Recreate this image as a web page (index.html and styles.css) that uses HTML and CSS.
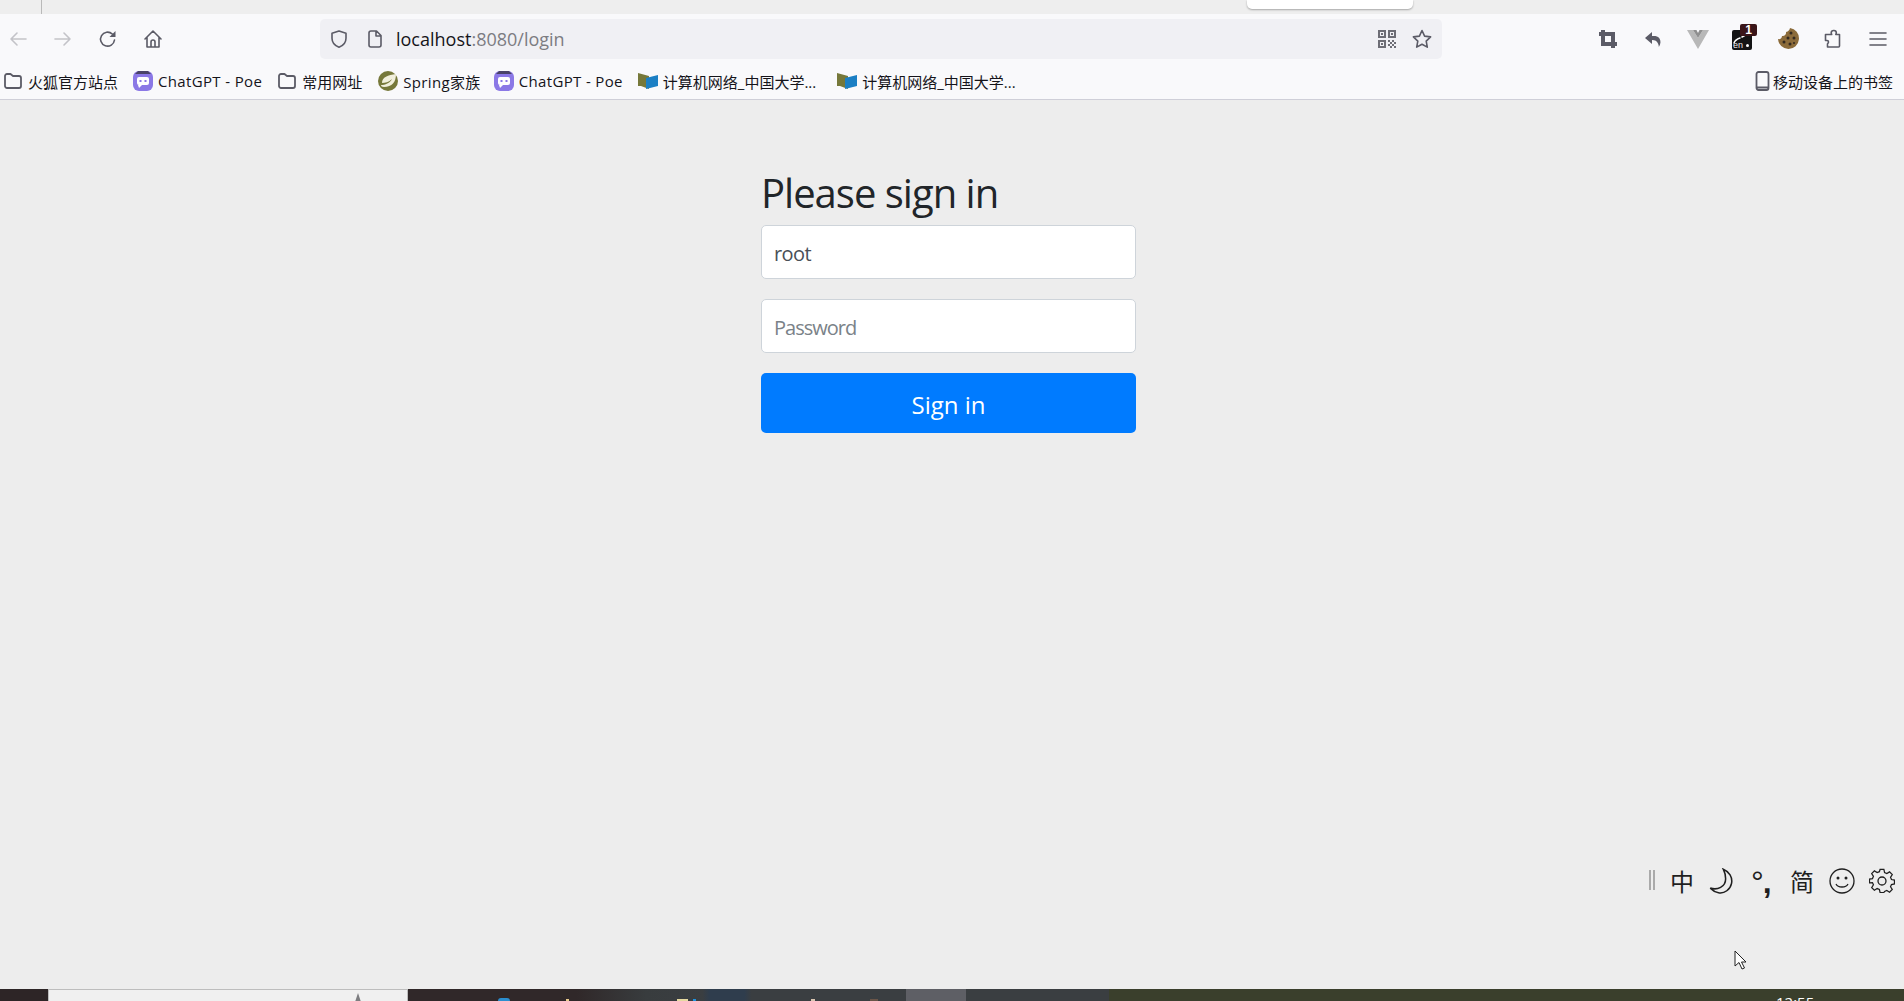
FILE: index.html
```html
<!DOCTYPE html>
<html lang="en">
<head>
<meta charset="utf-8">
<title>Please sign in</title>
<link rel="stylesheet" href="styles.css">
</head>
<body>
<div class="tabstrip"><span class="tab-sep"></span><span class="popup-edge"></span></div>
<header class="toolbar">
  <nav class="nav-group">
    <button class="tool faded"><svg viewBox="0 0 20 20" width="20" height="20"><path d="M18 10H3M9 4l-6 6 6 6"/></svg></button>
    <button class="tool faded"><svg viewBox="0 0 20 20" width="20" height="20"><path d="M2 10h15M11 4l6 6-6 6"/></svg></button>
    <button class="tool"><svg viewBox="0 0 20 20" width="20" height="20"><path d="M16.5 11a7 7 0 1 1-2.2-6"/><path class="fill" d="M17.5 2v6h-6z"/></svg></button>
    <button class="tool"><svg viewBox="0 0 20 20" width="20" height="20"><path d="M2 10l8-8 8 8M4 8.5V18h12V8.5M8 18v-5a2 2 0 0 1 4 0v5"/></svg></button>
  </nav>
  <div class="urlbar">
    <svg class="url-shield" viewBox="0 0 20 20" width="20" height="20"><path d="M10 2l7 2.2v5c0 4.500-3 7.500-7 9-4-1.500-7-4.500-7-9v-5z"/></svg>
    <svg class="url-file" viewBox="0 0 20 20" width="20" height="20"><path d="M4 4a2 2 0 0 1 2-2h5.500L16 6.500V16a2 2 0 0 1-2 2H6a2 2 0 0 1-2-2zM11 2v5h5"/></svg>
    <span class="url-text">localhost<span class="url-dim">:8080/login</span></span>
    <svg class="url-qr" viewBox="0 0 18 18" width="18" height="18"><path class="qr" d="M0 0h8v8H0zM2 2v4h4V2zM10 0h8v8h-8zM12 2v4h4V2zM0 10h8v8H0zM2 12v4h4v-4zM3 3h2v2H3zM13 3h2v2h-2zM3 13h2v2H3zM10 10h2v2h-2zM14 10h2v2h-2zM12 12h2v2h-2zM16 12h2v2h-2zM10 14h2v2h-2zM14 14h2v2h-2zM12 16h2v2h-2zM16 16h2v2h-2z"/></svg>
    <svg class="url-star" viewBox="0 0 20 20" width="20" height="20"><path d="M10 1.500l2.600 5.600 6 .8-4.400 4.200 1.100 6L10 15.200l-5.300 2.900 1.100-6L1.400 7.900l6-.8z"/></svg>
  </div>
  <div class="ext-group">
    <button class="tool"><svg viewBox="0 0 20 20" width="20" height="20"><path class="thick" d="M5 1v14h14M1 5h14v14"/></svg></button>
    <button class="tool"><svg viewBox="0 0 20 20" width="20" height="20"><path class="fill" d="M9 3L2 9l7 6v-4c3 0 5 1 6 3.500 1 2 .8 3.500.8 3.500 2-3 2.200-6 .7-8.500C15 7 12 6.800 9 7z"/></svg></button>
    <button class="tool"><svg viewBox="0 0 24 24" width="24" height="24"><path class="vue-a" d="M1 3h6l5 8 5-8h6L12 22z"/><path class="vue-b" d="M7 3h3.500L12 6l1.500-3H17l-5 8z"/></svg></button>
    <button class="tool"><span class="en-icon"><svg viewBox="0 0 20 20" width="20" height="20"><path d="M2 13c1-3 3-4 6-5M10 7l5-3"/></svg><span class="en-label">en</span><span class="en-dot"></span><span class="en-badge">1</span></span></button>
    <button class="tool"><svg viewBox="0 0 22 24" width="22" height="24"><path class="cookie" d="M13 1a10.500 10.500 0 1 1-12 11c2 .500 4-.500 4-3 2.500.500 4.500-1.500 4-4 2.500-.500 3.500-2 4-4z"/><g class="crumbs"><circle cx="14" cy="6" r="1.500"/><circle cx="17" cy="11" r="1.500"/><circle cx="11" cy="11" r="1.500"/><circle cx="7" cy="15" r="1.500"/><circle cx="13" cy="17" r="1.500"/><circle cx="17" cy="16" r="1"/></g></svg></button>
    <button class="tool"><svg viewBox="0 0 20 20" width="20" height="20"><path d="M10.500 1.500a2.300 2.300 0 0 0-2.300 2.300c0 .7.3 1.200.5 1.700H2.500v6h1.500c1.200 0 1.500.8 1.500 1.500 0 .7-.3 1.300-1 1.800v3.200h11a1 1 0 0 0 1-1V5.500h-3.700c.2-.5.5-1 .5-1.700a2.300 2.300 0 0 0-2.300-2.300z"/></svg></button>
    <button class="tool"><svg viewBox="0 0 20 20" width="20" height="20"><path d="M2 4h16M2 10h16M2 16h16"/></svg></button>
  </div>
</header>
<div class="bookmarks">
  <a class="bm bm-a"><svg class="bm-folder" viewBox="0 0 18 16" width="18" height="16"><path d="M1 3a2 2 0 0 1 2-2h3.500L9 3h6a2 2 0 0 1 2 2v8a2 2 0 0 1-2 2H3a2 2 0 0 1-2-2z"/></svg>火狐官方站点</a>
  <a class="bm bm-b bm-latin"><svg class="poe" viewBox="0 0 20 20" width="20" height="20"><rect width="20" height="20" rx="6" fill="#8b78e6"/><path d="M5 0h10l3 3H2z" fill="#4a4368"/><rect x="4" y="6" width="12" height="8" rx="2" fill="#fff"/><rect x="6.500" y="9" width="2" height="2" fill="#8b78e6"/><rect x="11.500" y="9" width="2" height="2" fill="#8b78e6"/><path d="M5 14h4l-3 3z" fill="#fff"/></svg>ChatGPT - Poe</a>
  <a class="bm bm-c"><svg class="bm-folder" viewBox="0 0 18 16" width="18" height="16"><path d="M1 3a2 2 0 0 1 2-2h3.500L9 3h6a2 2 0 0 1 2 2v8a2 2 0 0 1-2 2H3a2 2 0 0 1-2-2z"/></svg>常用网址</a>
  <a class="bm bm-d bm-latin"><svg class="spring" viewBox="0 0 20 20" width="20" height="20"><circle cx="10" cy="10" r="10" fill="#76783a"/><path d="M18 3c0 8-4 13-12 13-2 0-3-1-3-2 4 0 9-2 11-6-3 3-7 4-10 4 0-6 6-8 14-9z" fill="#f1efdc"/></svg>Spring家族</a>
  <a class="bm bm-e bm-latin"><svg class="poe" viewBox="0 0 20 20" width="20" height="20"><rect width="20" height="20" rx="6" fill="#8b78e6"/><path d="M5 0h10l3 3H2z" fill="#4a4368"/><rect x="4" y="6" width="12" height="8" rx="2" fill="#fff"/><rect x="6.500" y="9" width="2" height="2" fill="#8b78e6"/><rect x="11.500" y="9" width="2" height="2" fill="#8b78e6"/><path d="M5 14h4l-3 3z" fill="#fff"/></svg>ChatGPT - Poe</a>
  <a class="bm bm-f"><svg class="book" viewBox="0 0 20 16" width="20" height="16"><path d="M0 0l11 3v13L3 13H0z" fill="#76783a"/><path d="M8 5l12-3v11L8 16z" fill="#1b7fc4"/></svg>计算机网络_中国大学...</a>
  <a class="bm bm-g"><svg class="book" viewBox="0 0 20 16" width="20" height="16"><path d="M0 0l11 3v13L3 13H0z" fill="#76783a"/><path d="M8 5l12-3v11L8 16z" fill="#1b7fc4"/></svg>计算机网络_中国大学...</a>
  <a class="bm bm-mobile"><svg class="bm-phone" viewBox="0 0 14 20" width="15" height="20"><path d="M3 1h8a2 2 0 0 1 2 2v14a2 2 0 0 1-2 2H3a2 2 0 0 1-2-2V3a2 2 0 0 1 2-2zM1 16.500h12"/></svg>移动设备上的书签</a>
</div>
<main class="page">
  <form class="signin">
    <h2 class="signin-title">Please sign in</h2>
    <input class="field" type="text" value="root">
    <input class="field" type="password" placeholder="Password">
    <button class="submit" type="button">Sign in</button>
  </form>
</main>
<div class="ime">
  <span class="ime-grip"></span>
  <span class="ime-item ime-zh">中</span>
  <svg class="ime-item" viewBox="1 0 21 22" width="25" height="26"><path d="M13 1c5 2 8 7 7 12-1 5-6 9-11 8-3-.500-5-2-7-4 6 2 13-1 13-8 0-3-1-6-2-8z"/></svg>
  <span class="ime-item ime-punct"><span class="ime-deg">°</span>,</span>
  <span class="ime-item ime-zh ime-jian">简</span>
  <svg class="ime-item" viewBox="0 0 26 26" width="26" height="26"><circle cx="13" cy="13" r="12"/><circle class="fill-ime" cx="9" cy="10" r="1.500"/><circle class="fill-ime" cx="17" cy="10" r="1.500"/><path d="M7 16c2 4 10 4 12 0"/></svg>
  <svg class="ime-item" viewBox="0 0 26 26" width="26" height="26"><circle cx="13" cy="13" r="4"/><path d="M11 1h4l.7 3.300 2.300 1 2.900-1.800 2.800 2.800-1.800 2.900 1 2.300 3.100.5v4l-3.100.7-1 2.300 1.800 2.900-2.800 2.800-2.900-1.800-2.300 1L15 25h-4l-.7-3.100-2.300-1-2.900 1.800-2.800-2.800 1.800-2.900-1-2.300L0 15v-4l3.100-.5 1-2.300-1.800-2.900 2.800-2.800 2.900 1.800 2.300-1z" transform="translate(.5 .5) scale(.96)"/></svg>
</div>
<svg class="pointer" viewBox="0 0 13 20" width="13" height="20"><path d="M1 1v15l4-3.500 3 6.500 2.500-1-3-6H12z"/></svg>
<footer class="taskbar">
  <span class="tb-dark"></span>
  <span class="tb-light"><span class="tb-pen"></span></span>
  <span class="tb-apps"><span class="tb-block"></span><span class="tb-mark tb-m1"></span><span class="tb-mark tb-m2"></span><span class="tb-mark tb-m3"></span><span class="tb-mark tb-m4"></span><span class="tb-mark tb-m5"></span><span class="tb-mark tb-m6"></span></span>
  <span class="tb-olive"><span class="tb-clock">12:55</span></span>
</footer>
</body>
</html>
```
FILE: styles.css
```css
* { box-sizing: border-box; }
html, body { margin: 0; height: 100%; }
body {
  display: flex;
  flex-direction: column;
  height: 1001px;
  overflow: hidden;
  background: #ededed;
  font-family: "Open Sans", "Noto Sans CJK SC", sans-serif;
  color: #212529;
  position: relative;
}
.tabstrip { height: 14px; background: #eeeeee; position: relative; flex: none; }
.tab-sep { display: block; width: 1px; height: 14px; margin-left: 41px; background: #b9b9b9; }
.popup-edge {
  position: absolute; left: 1247px; top: 0; width: 166px; height: 9px;
  background: #fff; border-radius: 0 0 5px 5px; box-shadow: 0 1px 2px rgba(0,0,0,.3);
}
.toolbar { display: flex; align-items: center; height: 45px; background: #f9f9fb; flex: none; }
.nav-group, .ext-group { display: flex; gap: 9px; height: 40px; align-self: flex-end; align-items: center; }
.ext-group { margin-left: 148px; }
.tool { width: 36px; height: 36px; padding: 0; border: 0; background: none; display: flex; align-items: center; justify-content: center; }
.tool svg, .urlbar svg { fill: none; stroke: #5b5b66; stroke-width: 1.600; stroke-linejoin: round; stroke-linecap: round; }
.tool.faded svg { stroke: #c3c3c8; }
.tool svg .fill { fill: #5b5b66; stroke: none; }
.tool svg .thick { stroke-width: 4; stroke-linecap: butt; stroke-linejoin: miter; }
.tool svg .vue-a { fill: #b8b8b8; stroke: none; }
.tool svg .vue-b { fill: #8f8f8f; stroke: none; }
.tool svg .cookie { fill: #8b6b3a; stroke: none; }
.tool svg .crumbs { fill: #33291f; stroke: none; }
.en-icon { position: relative; display: block; width: 20px; height: 20px; margin: 2px 0 0 -2px; background: #141414; border-radius: 2px; }
.tool .en-icon svg { display: block; stroke: #fff; stroke-width: 1.500; }
.en-label { position: absolute; left: 1px; bottom: 0; color: #eee; font: 400 9px/10px "Liberation Sans", sans-serif; }
.en-dot { position: absolute; right: 3px; bottom: 3px; width: 3px; height: 3px; border-radius: 50%; background: #fff; }
.en-badge {
  position: absolute; left: 8px; top: -6px; width: 17px; height: 12px;
  background: #3a1518; color: #fff; border-radius: 2px;
  font: 700 12px/12px "Liberation Sans", sans-serif; text-align: center;
}
.urlbar {
  width: 1122px; height: 40px; margin-left: 149px; align-self: flex-end;
  display: flex; align-items: center; padding-left: 9px;
  background: #f0f0f4; border-radius: 5px;
}
.url-file { margin-left: 16px; }
.url-text { margin-left: 11px; font-size: 18px; letter-spacing: 0; color: #15141a; white-space: nowrap; }
.url-dim { color: #7c7c82; }
.urlbar .url-qr { margin-left: auto; stroke: none; fill: #6d6d75; }
.urlbar .url-star { margin-left: 16px; margin-right: 10px; }
.bookmarks { display: flex; align-items: center; height: 41px; background: #f9f9fb; border-bottom: 1px solid #cfcfd8; padding: 4px 0 0 4px; flex: none; font-size: 15px; color: #15141a; }
.bm { display: flex; align-items: center; white-space: nowrap; gap: 6px; }
.bm-latin { letter-spacing: .35px; gap: 5px; }
.bm-folder, .bm-phone { fill: none; stroke: #5b5b66; stroke-width: 1.800; stroke-linejoin: round; }
.bm-b { margin-left: 15px; }
.bm-c { margin-left: 16px; }
.bm-d { margin-left: 16px; }
.bm-e { margin-left: 13px; }
.bm-f { margin-left: 15px; gap: 5px; }
.bm-g { margin-left: 21px; gap: 5px; }
.bm-mobile { margin-left: auto; margin-right: 11px; gap: 3px; }
.page { flex: 1; padding: 69px 0 0 761px; }
.signin { width: 375px; display: flex; flex-direction: column; }
.signin-title { margin: 0 0 8px; font-size: 40px; font-weight: 400; line-height: 48px; letter-spacing: -1px; }
.field {
  display: block; width: 100%; height: 54px; margin-bottom: 20px; padding: 2px 12px 0;
  font: 400 20px "Open Sans", sans-serif; color: #495057;
  background: #fff; border: 1px solid #ced4da; border-radius: 5px;
  letter-spacing: -.6px;
}
.field::placeholder { color: #7a8288; opacity: 1; letter-spacing: -1px; }
.submit {
  height: 60px; border: 0; border-radius: 5px; background: #007bff; color: #fff;
  font: 400 24px "Open Sans", sans-serif; padding: 2px 0 0; letter-spacing: 0;
}
.ime { position: absolute; left: 1649px; top: 868px; width: 250px; height: 26px; }
.ime-grip { position: absolute; left: 0; top: 2px; width: 6px; height: 20px; border-left: 2px solid #aaa; border-right: 2px solid #aaa; }
.ime-item { position: absolute; top: 0; fill: none; stroke: #1f1f1f; stroke-width: 1.300; color: #1f1f1f; }
.ime .fill-ime { fill: #1f1f1f; stroke: none; }
.ime-zh { font-family: "Noto Sans CJK SC", sans-serif; font-size: 24px; line-height: 26px; }
.ime-item:nth-child(2) { left: 21px; }
.ime-item:nth-child(3) { left: 60px; }
.ime-punct { left: 102px; top: 1px; font: 700 32px/26px "Liberation Sans", sans-serif; letter-spacing: -1px; }
.ime-deg { font-weight: 400; }
.ime-jian { left: 141px; }
.ime-item:nth-child(6) { left: 180px; }
.ime-item:nth-child(7) { left: 220px; }
.pointer { position: absolute; left: 1734px; top: 950px; fill: #fff; stroke: #222; stroke-width: 1; }
.taskbar { display: flex; height: 12px; flex: none; overflow: hidden; }
.taskbar span { display: block; }
.tb-dark { width: 48px; background: #2d2526; }
.tb-light { width: 360px; background: #f0f0f0; border: 1px solid #bdbdbd; border-bottom: 0; position: relative; }
.tb-pen { position: absolute; left: 305px; top: 3px; width: 8px; height: 12px; background: #7d7d80; clip-path: polygon(50% 0, 100% 100%, 0 100%); }
.tb-apps { width: 701px; position: relative; background: linear-gradient(90deg, #302829 0, #302829 24%, #383c3e 34%, #3a3e41 42%, #2f3d4d 43%, #2f3d4d 48%, #3a3e41 49%, #3a3e41 100%); }
.tb-block { position: absolute; left: 498px; top: 0; width: 60px; height: 12px; background: #5e5f65; }
.tb-mark { position: absolute; top: 10px; height: 2px; }
.tb-m1 { left: 90px; width: 12px; top: 9px; height: 3px; background: #2b8fd0; border-radius: 6px 6px 0 0; }
.tb-m2 { left: 158px; width: 3px; background: #e8c98c; }
.tb-m3 { left: 269px; width: 11px; background: #e6d9a0; }
.tb-m4 { left: 285px; width: 3px; background: #1f93e0; }
.tb-m5 { left: 403px; width: 4px; background: #d8c4b0; }
.tb-m6 { left: 462px; width: 8px; background: #6a5548; }
.tb-olive { flex: 1; background: #3a3f2c; position: relative; }
.tb-clock { position: absolute; left: 667px; top: 3px; color: #fff; font-size: 15px; line-height: 20px; }
```
